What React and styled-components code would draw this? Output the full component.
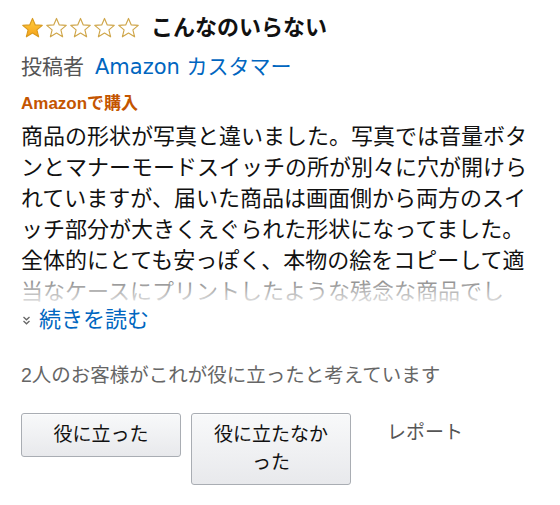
import React from 'react';
import styled, { createGlobalStyle } from 'styled-components';

const GlobalStyle = createGlobalStyle`
  body {
    margin: 0;
    background: #fff;
    font-family: "Liberation Sans", "Noto Sans CJK JP", sans-serif;
    color: #111;
  }
`;

const Review = styled.div`
  width: 560px;
  box-sizing: border-box;
  padding: 14px 20px 20px 21px;
`;

const Header = styled.div`
  display: flex;
  align-items: center;
  gap: 11px;
  height: 28px;
`;

const Stars = styled.div`
  display: flex;
  gap: 1px;
`;

const Title = styled.h1`
  margin: 0;
  font-size: 22px;
  line-height: 28px;
  font-weight: bold;
  color: #111;
`;

const Author = styled.div`
  margin-top: 11px;
  font-size: 21px;
  line-height: 28px;
  color: #555;
`;

const Name = styled.a`
  margin-left: 11px;
  font-family: "DejaVu Sans", "Noto Sans CJK JP", sans-serif;
  font-size: 21px;
  color: #0066c0;
  text-decoration: none;
`;

const Badge = styled.div`
  margin-top: 13px;
  font-size: 17px;
  line-height: 20px;
  font-weight: bold;
  color: #c45500;
`;

const Body = styled.div`
  position: relative;
  margin-top: 7px;
  width: 520px;
  max-height: 186px;
  overflow: hidden;
  font-size: 22px;
  line-height: 31px;
  color: #111;

  &::after {
    content: "";
    position: absolute;
    left: 0;
    right: 0;
    bottom: 0;
    height: 34px;
    background: linear-gradient(rgba(255, 255, 255, 0.4), rgba(255, 255, 255, 0.95));
  }
`;

const More = styled.a`
  display: flex;
  align-items: center;
  gap: 7px;
  margin-top: 1px;
  font-size: 22px;
  line-height: 24px;
  color: #0066c0;
  text-decoration: none;
`;

const Helpful = styled.div`
  margin-top: 31px;
  font-size: 19.5px;
  line-height: 24px;
  color: #666;
`;

const Actions = styled.div`
  display: flex;
  align-items: flex-start;
  gap: 10px;
  margin-top: 26px;
`;

const VoteButton = styled.button`
  width: 160px;
  box-sizing: border-box;
  padding: 7px 17px;
  border: 1px solid #a9adb3;
  border-radius: 3px;
  background: linear-gradient(#f8f9fa, #e8e9ec);
  box-shadow: 0 1px 0 rgba(255, 255, 255, 0.6) inset;
  font-family: inherit;
  font-size: 19px;
  line-height: 28px;
  color: #111;
  text-align: center;
`;

const Report = styled.a`
  margin-left: 26px;
  font-size: 19px;
  line-height: 40px;
  color: #555;
  text-decoration: none;
`;

const Star = ({ filled }) => (
  <svg width="23" height="22" viewBox="0 0 24 23">
    <defs>
      <linearGradient id="gold" x1="0" y1="0" x2="0" y2="1">
        <stop offset="0" stopColor="#ffce3d" />
        <stop offset="1" stopColor="#f7a21b" />
      </linearGradient>
    </defs>
    <polygon
      points="12,1.5 14.9,8.3 22.2,8.8 16.6,13.5 18.4,20.7 12,16.8 5.6,20.7 7.4,13.5 1.8,8.8 9.1,8.3"
      fill={filled ? 'url(#gold)' : '#fff'}
      stroke={filled ? '#d99a1e' : '#cfa64a'}
      strokeWidth="1.2"
      strokeLinejoin="round"
    />
  </svg>
);

const Chevrons = () => (
  <svg width="11" height="11" viewBox="0 0 11 11">
    <path d="M2.5 2 L5.5 4.8 L8.5 2 M2.5 6 L5.5 8.8 L8.5 6" fill="none" stroke="#666" strokeWidth="1.3" />
  </svg>
);

const App = () => {
  const rating = 1;

  return (
    <Review>
      <GlobalStyle />
      <Header>
        <Stars>
          {[1, 2, 3, 4, 5].map(n => <Star key={n} filled={n <= rating} />)}
        </Stars>
        <Title>こんなのいらない</Title>
      </Header>

      <Author>
        投稿者<Name href="#">Amazon カスタマー</Name>
      </Author>

      <Badge>Amazonで購入</Badge>

      <Body>
        商品の形状が写真と違いました。写真では音量ボタンとマナーモードスイッチの所が別々に穴が開けられていますが、届いた商品は画面側から両方のスイッチ部分が大きくえぐられた形状になってました。全体的にとても安っぽく、本物の絵をコピーして適当なケースにプリントしたような残念な商品でした。
      </Body>
      <More href="#">
        <Chevrons />
        続きを読む
      </More>

      <Helpful>2人のお客様がこれが役に立ったと考えています</Helpful>

      <Actions>
        <VoteButton>役に立った</VoteButton>
        <VoteButton>役に立たなかった</VoteButton>
        <Report href="#">レポート</Report>
      </Actions>
    </Review>
  );
};

export default App;
